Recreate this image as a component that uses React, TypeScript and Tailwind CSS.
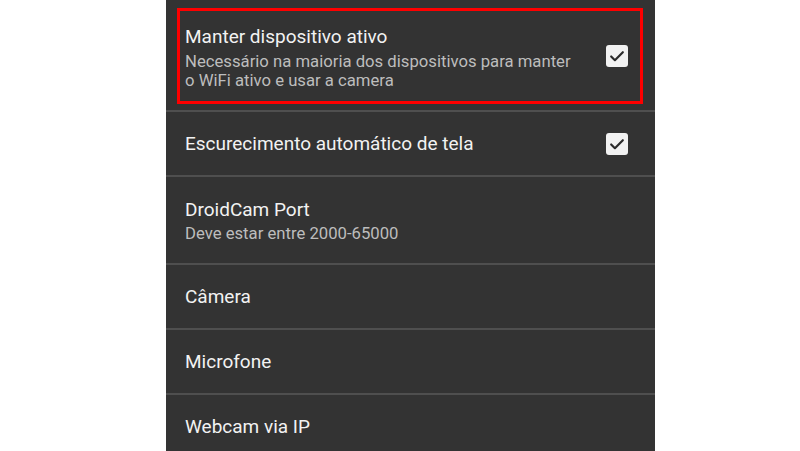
import React from 'react'

function Check() {
  return (
    <div className="w-[22px] h-[22px] rounded-[3px] bg-[#f2f2f2] flex items-center justify-center shrink-0 self-center">
      <svg viewBox="0 0 24 24" className="w-[20px] h-[20px]" fill="none" stroke="#2b2b2b" strokeWidth="2.6" strokeLinecap="round" strokeLinejoin="round">
        <path d="M5 12.5l4.5 4.5L19 7.5" />
      </svg>
    </div>
  )
}

function Divider() {
  return <div className="h-[2px] bg-[#4f4f4f] shrink-0" />
}

function Row({ title, sub, height, checked }: { title: string; sub?: string; height: string; checked?: boolean }) {
  return (
    <div className={`${height} shrink-0 flex items-center pl-[19px] pr-[27px]`}>
      <div className="flex-1">
        <div className="text-[19px] leading-[24px] text-[#f2f2f2]">{title}</div>
        {sub && <div className="text-[16.7px] leading-[19px] text-[#bdbdbd] mt-[2px]">{sub}</div>}
      </div>
      {checked && <Check />}
    </div>
  )
}

export default function App() {
  return (
    <div className="w-[800px] h-[451px] bg-white overflow-hidden" style={{ fontFamily: 'Roboto, "Noto Sans", sans-serif' }}>
      <div className="ml-[166px] w-[489px] h-[451px] bg-[#333333] flex flex-col overflow-hidden">
        {/* highlighted row */}
        <div className="h-[110px] shrink-0 pt-[8px] pl-[11px]">
          <div className="w-[466px] h-[96px] border-[3px] border-[#ff0000] flex pl-[5px] pr-[12px]">
            <div className="flex-1 pt-[14px]">
              <div className="text-[19px] leading-[24px] text-[#f2f2f2]">Manter dispositivo ativo</div>
              <div className="text-[16.7px] leading-[19px] text-[#bdbdbd] mt-[3px]">
                Necessário na maioria dos dispositivos para manter
                <br />o WiFi ativo e usar a camera
              </div>
            </div>
            <Check />
          </div>
        </div>
        <Divider />
        <Row title="Escurecimento automático de tela" height="h-[63px]" checked />
        <Divider />
        <Row title="DroidCam Port" sub="Deve estar entre 2000-65000" height="h-[86px]" />
        <Divider />
        <Row title="Câmera" height="h-[63px]" />
        <Divider />
        <Row title="Microfone" height="h-[63px]" />
        <Divider />
        <Row title="Webcam via IP" height="h-[63px]" />
      </div>
    </div>
  )
}
